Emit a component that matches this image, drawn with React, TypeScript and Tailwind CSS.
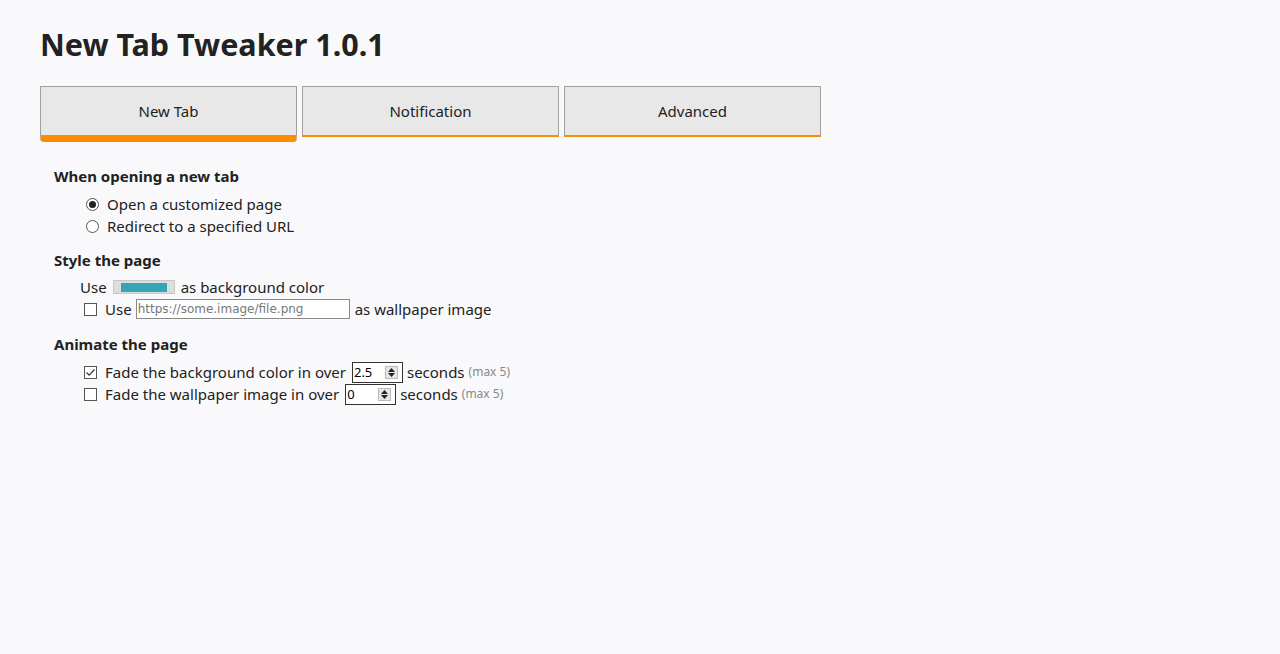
import React from "react";

const tabs = [
  { label: "New Tab", active: true },
  { label: "Notification", active: false },
  { label: "Advanced", active: false },
];

const Radio: React.FC<{ checked?: boolean }> = ({ checked }) => (
  <span className="w-[13px] h-[13px] rounded-full border border-[#555] bg-white flex items-center justify-center shrink-0">
    {checked && <span className="w-[7px] h-[7px] rounded-full bg-[#222]" />}
  </span>
);

const Checkbox: React.FC<{ checked?: boolean }> = ({ checked }) => (
  <span className="w-[13px] h-[13px] border border-[#555] bg-white flex items-center justify-center shrink-0">
    {checked && (
      <svg width="11" height="11" viewBox="0 0 11 11">
        <path d="M1.5 5.5 L4.2 8.2 L9.5 2.5" fill="none" stroke="#333" strokeWidth="1.2" />
      </svg>
    )}
  </span>
);

const NumberBox: React.FC<{ value: string }> = ({ value }) => (
  <span className="inline-flex items-center w-[51px] h-[21px] border border-[#333] bg-white ml-[6px] mr-[4px] pl-[1px] pr-[4px] text-[13px] text-black">
    <span className="flex-1 leading-none">{value}</span>
    <span className="w-[13px] h-[13px] bg-[#e6e6e6] border border-[#bbb] flex flex-col items-center justify-center gap-[1px]">
      <svg width="7" height="4" viewBox="0 0 7 4">
        <path d="M0 4 L3.5 0 L7 4 Z" fill="#222" />
      </svg>
      <svg width="7" height="4" viewBox="0 0 7 4">
        <path d="M0 0 L3.5 4 L7 0 Z" fill="#222" />
      </svg>
    </span>
  </span>
);

const App: React.FC = () => {
  return (
    <div className="min-h-screen bg-[#f9f9fb] text-[#222] font-['Noto_Sans',sans-serif] px-[40px] pt-[22px]">
      <h1 className="text-[30.5px] font-bold leading-[44px] text-[#222]">New Tab Tweaker 1.0.1</h1>

      {/* Tabs */}
      <div className="flex gap-[5px] mt-[20px] w-[781px]">
        {tabs.map((tab) => (
          <div
            key={tab.label}
            className={`flex-1 h-[51px] bg-[#e8e8e8] border-t border-x border-[#a0a0a0] flex items-center justify-center text-[15px] text-[#222] ${
              tab.active
                ? "border-b-[7px] border-b-[#ff8c00] rounded-b-[4px] h-[56px]"
                : "border-b-2 border-b-[#ff8c00]"
            }`}
          >
            <span className={tab.active ? "mt-[1px]" : ""}>{tab.label}</span>
          </div>
        ))}
      </div>

      <div className="pl-[14px] pt-[23px] text-[15px] leading-[22px]">
        {/* When opening a new tab */}
        <h2 className="font-bold text-[15px] mb-[6px]">When opening a new tab</h2>
        <div className="pl-[32px]">
          <label className="flex items-center gap-[8px]">
            <Radio checked />
            <span>Open a customized page</span>
          </label>
          <label className="flex items-center gap-[8px]">
            <Radio />
            <span>Redirect to a specified URL</span>
          </label>
        </div>

        {/* Style the page */}
        <h2 className="font-bold text-[15px] mt-[12px] mb-[5px]">Style the page</h2>
        <div className="pl-[26px] flex items-center">
          <span>Use</span>
          <span className="w-[62px] h-[14px] mx-[6px] bg-[#dddddd] border border-[#c8c8c8] flex items-center justify-center">
            <span className="w-[46px] h-[9px] bg-[#36a6b6]" />
          </span>
          <span>as background color</span>
        </div>
        <div className="pl-[30px] flex items-center">
          <Checkbox />
          <span className="ml-[8px]">Use</span>
          <span className="w-[214px] h-[20px] ml-[4px] mr-[5px] border border-[#888] bg-white flex items-center px-[1px] text-[12px] text-[#777] font-['DejaVu_Sans',sans-serif]">
            https://some.image/file.png
          </span>
          <span>as wallpaper image</span>
        </div>

        {/* Animate the page */}
        <h2 className="font-bold text-[15px] mt-[13px] mb-[6px]">Animate the page</h2>
        <div className="pl-[30px]">
          <div className="flex items-center">
            <Checkbox checked />
            <span className="ml-[8px]">Fade the background color in over</span>
            <NumberBox value="2.5" />
            <span>seconds</span>
            <span className="ml-[4px] text-[12px] text-[#888]">(max 5)</span>
          </div>
          <div className="flex items-center">
            <Checkbox />
            <span className="ml-[8px]">Fade the wallpaper image in over</span>
            <NumberBox value="0" />
            <span>seconds</span>
            <span className="ml-[4px] text-[12px] text-[#888]">(max 5)</span>
          </div>
        </div>
      </div>
    </div>
  );
};

export default App;
